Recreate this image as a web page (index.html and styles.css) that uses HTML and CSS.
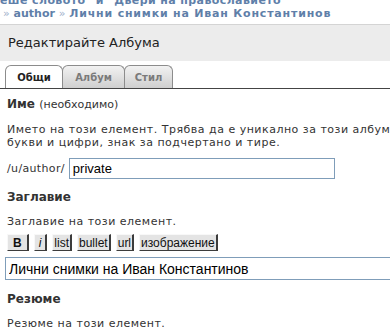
FILE: index.html
```html
<!DOCTYPE html>
<html lang="bg">
<head>
    <meta charset="UTF-8">
    <title>Редактирайте Албума</title>
    <link rel="stylesheet" href="styles.css">
</head>
<body>
    <div class="crumbs">
        <div class="crumb-line">еше словото" и "Двери на православието</div>
        <div class="crumb-line"><span class="sep">»</span> author <span class="sep">»</span> <span class="crumb-cyr">Лични снимки на Иван Константинов</span></div>
    </div>

    <div class="page-title">Редактирайте Албума</div>

    <ul class="tabs">
        <li class="tab active">Общи</li>
        <li class="tab">Албум</li>
        <li class="tab">Стил</li>
    </ul>

    <form class="edit-form">
        <div class="field">
            <div class="field-label">Име <span class="required">(необходимо)</span></div>
            <div class="field-help">Името на този елемент. Трябва да е уникално за този албум. Изг<br>букви и цифри, знак за подчертано и тире.</div>
            <div class="path-row">
                <span class="path">/u/author/</span>
                <input type="text" class="name-input" value="private">
            </div>
        </div>

        <div class="field">
            <div class="field-label">Заглавие</div>
            <div class="field-help">Заглавие на този елемент.</div>
            <div class="toolbar">
                <button type="button" class="tb bold">B</button>
                <button type="button" class="tb italic">i</button>
                <button type="button" class="tb">list</button>
                <button type="button" class="tb">bullet</button>
                <button type="button" class="tb">url</button>
                <button type="button" class="tb">изображение</button>
            </div>
            <input type="text" class="wide-input" value="Лични снимки на Иван Константинов">
        </div>

        <div class="field">
            <div class="field-label">Резюме</div>
            <div class="field-help">Резюме на този елемент.</div>
            <div class="toolbar">
                <button type="button" class="tb bold">B</button>
                <button type="button" class="tb italic">i</button>
                <button type="button" class="tb">list</button>
                <button type="button" class="tb">bullet</button>
                <button type="button" class="tb">url</button>
                <button type="button" class="tb">изображение</button>
            </div>
        </div>
    </form>
</body>
</html>
```
FILE: styles.css
```css
body {
    font-family: "DejaVu Sans", Verdana, sans-serif;
    font-size: 11px;
    color: #333333;
    background-color: #ffffff;
    margin: 0;
    padding: 0;
    overflow: hidden;
}

.crumbs {
    margin-top: -6px;
    padding-left: 3px;
    font-weight: bold;
    color: #5f7fa9;
    line-height: 13px;
    white-space: nowrap;
}

.crumb-line:first-child {
    margin-left: -3px;
    letter-spacing: 0.4px;
}

.crumb-cyr {
    letter-spacing: 0.8px;
}

.sep {
    color: #9fb2cc;
    font-weight: normal;
}

.page-title {
    margin-top: 4px;
    height: 36px;
    line-height: 36px;
    padding-left: 8px;
    background-color: #ececec;
    border-top: 1px solid #d4d4d4;
    font-size: 13px;
    color: #222222;
}

.tabs {
    display: flex;
    list-style: none;
    margin: 4px 0 0;
    padding: 0 0 0 5px;
    border-bottom: 1px solid #444444;
}

.tab {
    box-sizing: border-box;
    height: 23px;
    line-height: 24px;
    margin-right: -1px;
    font-size: 10px;
    font-weight: bold;
    color: #7a7a7a;
    border: 1px solid #8c8c8c;
    border-bottom: none;
    border-radius: 6px 6px 0 0;
    background: linear-gradient(#f2f2f2, #cfcfcf);
    text-align: center;
}

.tab:nth-child(1) {
    width: 58px;
}

.tab:nth-child(2) {
    width: 63px;
}

.tab:nth-child(3) {
    width: 49px;
}

.tab.active {
    color: #222222;
    background: #ffffff;
    position: relative;
    z-index: 1;
}

.edit-form {
    padding: 0 7px;
}

.field-label {
    font-size: 12px;
    font-weight: bold;
    color: #333333;
    margin-top: 7px;
    line-height: 16px;
}

.required {
    font-size: 11px;
    font-weight: normal;
}

.field-help {
    margin-top: 10px;
    line-height: 13px;
    letter-spacing: 0.5px;
    white-space: nowrap;
}

.path-row {
    display: flex;
    align-items: center;
    margin-top: 9px;
    gap: 4px;
}

.path {
    letter-spacing: 0.35px;
}

.name-input {
    box-sizing: border-box;
    width: 266px;
    height: 21px;
    padding: 1px 3px;
    border: 1px solid #7f9db9;
    font-family: "Liberation Sans", Arial, sans-serif;
    font-size: 13px;
    color: #000000;
}

.field:nth-child(2) .field-label {
    margin-top: 10px;
}

.field:nth-child(3) .field-label {
    margin-top: 11px;
}

.toolbar {
    display: flex;
    gap: 5px;
    margin-top: 6px;
}

.tb {
    height: 17px;
    padding: 0 1px;
    font-family: "Liberation Sans", Arial, sans-serif;
    font-size: 12px;
    line-height: 14px;
    color: #111111;
    background-color: #e4e4e4;
    border: 1px solid;
    border-color: #f8f8f8 #3c3c3c #3c3c3c #f8f8f8;
    border-right-width: 2px;
    border-radius: 0;
}

.tb.bold {
    font-weight: bold;
    padding: 0 5px;
}

.tb.italic {
    font-style: italic;
    padding: 0 4px;
}

.wide-input {
    display: block;
    box-sizing: border-box;
    width: 400px;
    height: 23px;
    margin: 6px 0 0 -2px;
    padding: 1px 3px;
    border: 1px solid #7f9db9;
    font-family: "Liberation Sans", Arial, sans-serif;
    font-size: 14px;
    color: #000000;
}
```
